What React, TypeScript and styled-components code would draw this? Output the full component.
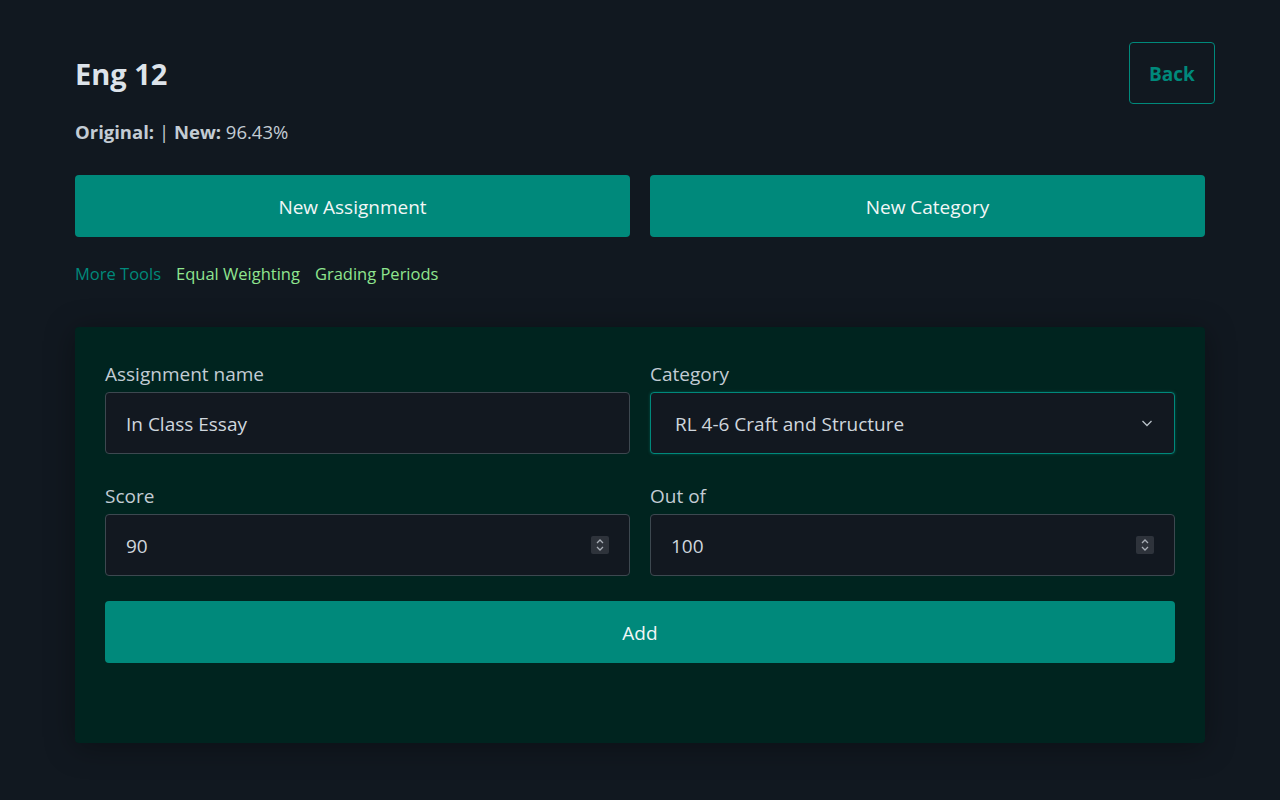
import styled, { createGlobalStyle } from 'styled-components';

const GlobalStyle = createGlobalStyle`
  body {
    margin: 0;
    background-color: #111820;
    font-family: 'Open Sans', 'Noto Sans', sans-serif;
    color: #cfd6dd;
  }
  * { box-sizing: border-box; }
`;

const Page = styled.div`
  padding: 42px 65px 40px 75px;
  min-height: 800px;
`;

const Header = styled.div`
  display: flex;
  justify-content: space-between;
  align-items: flex-start;
`;

const Title = styled.h1`
  margin: 14px 0 0;
  font-size: 29px;
  font-weight: 700;
  color: #dde3ea;
  line-height: 36px;
`;

const BackButton = styled.button`
  width: 86px;
  height: 62px;
  padding-top: 2px;
  background: transparent;
  border: 1px solid #00897b;
  border-radius: 4px;
  color: #00897b;
  font-family: inherit;
  font-size: 19px;
  font-weight: 700;
`;

const Stats = styled.p`
  margin: 15px 0 0;
  font-size: 18.5px;
  color: #c3ccd4;
  b { font-weight: 700; }
`;

const Content = styled.div`
  width: 1130px;
`;

const ButtonRow = styled.div`
  display: grid;
  grid-template-columns: 1fr 1fr;
  gap: 20px;
  margin-top: 31px;
`;

const PrimaryButton = styled.button`
  height: 62px;
  padding-top: 3px;
  background: #00897b;
  border: none;
  border-radius: 4px;
  color: #f2f6f6;
  font-family: inherit;
  font-size: 19px;
`;

const Tools = styled.div`
  display: flex;
  gap: 15px;
  margin-top: 25px;
  font-size: 16.5px;
`;

const ToolLink = styled.span<{ $muted?: boolean }>`
  color: ${(p) => (p.$muted ? '#00897b' : '#8fe58f')};
`;

const Card = styled.div`
  margin-top: 42px;
  height: 416px;
  background: #00241f;
  border-radius: 4px;
  padding: 34px 30px 30px;
  box-shadow: 0 4px 30px rgba(0, 0, 0, 0.35);
`;

const FormGrid = styled.div`
  display: grid;
  grid-template-columns: 1fr 1fr;
  column-gap: 20px;
  row-gap: 29px;
`;

const Field = styled.label`
  display: flex;
  flex-direction: column;
  gap: 5px;
  font-size: 19px;
  color: #c3ccd4;
`;

const InputBox = styled.div<{ $focused?: boolean }>`
  display: flex;
  align-items: center;
  height: 62px;
  padding: 2px 20px 0 ${(p) => (p.$focused ? '24px' : '20px')};
  background: #121820;
  border: 1px solid ${(p) => (p.$focused ? '#00897b' : '#3d4850')};
  border-radius: 4px;
  box-shadow: ${(p) => (p.$focused ? '0 0 3px rgba(0,137,123,0.5)' : 'none')};
  font-size: 19px;
  color: #cfd6dd;
`;

const Value = styled.span`
  flex: 1;
`;

const Spinner = styled.span`
  display: flex;
  align-items: center;
  justify-content: center;
  width: 18px;
  height: 18px;
  margin-top: -2px;
  background: #2e333b;
  border-radius: 2px;
`;

const AddButton = styled(PrimaryButton)`
  width: 100%;
  margin-top: 25px;
`;

function Chevron() {
  return (
    <svg width="14" height="14" viewBox="0 0 14 14" fill="none" style={{ marginTop: -2 }}>
      <path d="M2.5 5l4.5 4.5L11.5 5" stroke="#b9c1c8" strokeWidth="1.3" />
    </svg>
  );
}

function SpinIcon() {
  return (
    <Spinner>
      <svg width="10" height="14" viewBox="0 0 10 14" fill="none">
        <path d="M2 5l3-3 3 3M2 9l3 3 3-3" stroke="#a8aeb6" strokeWidth="1.3" />
      </svg>
    </Spinner>
  );
}

export default function App() {
  return (
    <>
      <GlobalStyle />
      <Page>
        <Header>
          <Title>Eng 12</Title>
          <BackButton>Back</BackButton>
        </Header>
        <Content>
          <Stats>
            <b>Original:</b> | <b>New:</b> 96.43%
          </Stats>
          <ButtonRow>
            <PrimaryButton>New Assignment</PrimaryButton>
            <PrimaryButton>New Category</PrimaryButton>
          </ButtonRow>
          <Tools>
            <ToolLink $muted>More Tools</ToolLink>
            <ToolLink>Equal Weighting</ToolLink>
            <ToolLink>Grading Periods</ToolLink>
          </Tools>
          <Card>
            <FormGrid>
              <Field>
                Assignment name
                <InputBox>
                  <Value>In Class Essay</Value>
                </InputBox>
              </Field>
              <Field>
                Category
                <InputBox $focused>
                  <Value>RL 4-6 Craft and Structure</Value>
                  <Chevron />
                </InputBox>
              </Field>
              <Field>
                Score
                <InputBox>
                  <Value>90</Value>
                  <SpinIcon />
                </InputBox>
              </Field>
              <Field>
                Out of
                <InputBox>
                  <Value>100</Value>
                  <SpinIcon />
                </InputBox>
              </Field>
            </FormGrid>
            <AddButton>Add</AddButton>
          </Card>
        </Content>
      </Page>
    </>
  );
}
